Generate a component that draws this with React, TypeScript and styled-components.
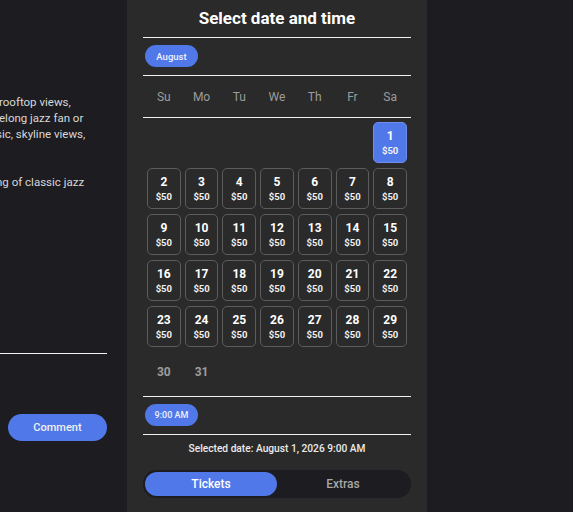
import { createGlobalStyle } from 'styled-components';
import styled from 'styled-components';

const GlobalStyle = createGlobalStyle`
  html, body {
    margin: 0;
    padding: 0;
    background: #1c1c21;
  }
  body {
    font-family: Roboto, Inter, "Noto Sans", sans-serif;
    color: #e6e6e6;
    overflow: hidden;
  }
`;

const Page = styled.div`
  display: grid;
  grid-template-columns: 127px 300px 1fr;
  height: 512px;
  background: #1c1c21;
`;

const LeftColumn = styled.div`
  display: flex;
  flex-direction: column;
  overflow: hidden;
  padding-top: 94px;
`;

const Paragraph = styled.div<{ $gap?: number }>`
  font-size: 11.5px;
  line-height: 16px;
  color: #d8d8d8;
  white-space: nowrap;
  margin-bottom: ${p => p.$gap || 0}px;
`;

const Line = styled.div<{ $shift: number }>`
  margin-left: ${p => p.$shift}px;
`;

const Rule = styled.hr<{ $width?: string }>`
  border: none;
  border-top: 1px solid #f2f2f2;
  margin: 0;
  width: ${p => p.$width || '100%'};
`;

const CommentButton = styled.button`
  margin: 60px 0 0 8px;
  width: 99px;
  height: 27px;
  border: none;
  border-radius: 14px;
  background: #5078e8;
  color: #f0f0f0;
  font-family: inherit;
  font-size: 11px;
  font-weight: 500;
`;

const Panel = styled.div`
  background: #2a2a2a;
  padding: 0 16px;
  display: flex;
  flex-direction: column;
`;

const Title = styled.h2`
  margin: 0;
  height: 37px;
  line-height: 37px;
  text-align: center;
  font-size: 17px;
  font-weight: 700;
  color: #ffffff;
`;

const PillRow = styled.div`
  display: flex;
  padding: 7px 2px 8px;
`;

const Pill = styled.div<{ $small?: boolean }>`
  width: 53px;
  height: 22px;
  border-radius: 11px;
  background: #5078e8;
  color: #eef0ff;
  font-size: ${p => (p.$small ? 9 : 9.5)}px;
  font-weight: 500;
  display: flex;
  align-items: center;
  justify-content: center;
`;

const WeekRow = styled.div`
  display: grid;
  grid-template-columns: repeat(7, 1fr);
  column-gap: 4px;
  padding: 0 4px;
  height: 41px;
  align-items: center;
  color: #9c9c9c;
  font-size: 12px;
  text-align: center;
`;

const DayGrid = styled.div`
  display: grid;
  grid-template-columns: repeat(7, 1fr);
  column-gap: 4px;
  row-gap: 5px;
  padding: 4px 4px 0;
`;

const DayCell = styled.div<{ $selected?: boolean; $disabled?: boolean }>`
  height: 41px;
  box-sizing: border-box;
  border-radius: 5px;
  border: 1px solid ${p => (p.$disabled ? 'transparent' : p.$selected ? '#6f8fee' : '#5c5c5c')};
  background: ${p => (p.$selected ? '#5078e8' : 'transparent')};
  display: flex;
  flex-direction: column;
  align-items: center;
  justify-content: ${p => (p.$disabled ? 'center' : 'flex-start')};
  padding-top: ${p => (p.$disabled ? 0 : 6)}px;
  color: ${p => (p.$disabled ? '#9c9c9c' : '#ffffff')};
`;

const DayNum = styled.span`
  font-size: 12px;
  font-weight: 700;
  line-height: 15px;
`;

const Price = styled.span`
  font-size: 9.5px;
  font-weight: 700;
  line-height: 14px;
  color: #f0f0f0;
`;

const Spacer = styled.div<{ $h: number }>`
  height: ${p => p.$h}px;
`;

const SelectedText = styled.div`
  text-align: center;
  font-size: 10.2px;
  font-weight: 500;
  color: #ececec;
  height: 28px;
  line-height: 28px;
`;

const Tabs = styled.div`
  margin-top: 7px;
  height: 28px;
  border-radius: 14px;
  background: #1c1c21;
  display: grid;
  grid-template-columns: 1fr 1fr;
  padding: 2px;
  box-sizing: border-box;
`;

const Tab = styled.div<{ $active?: boolean }>`
  border-radius: 12px;
  background: ${p => (p.$active ? '#5078e8' : 'transparent')};
  color: ${p => (p.$active ? '#ffffff' : '#a8a8a8')};
  font-size: 12px;
  font-weight: 500;
  display: flex;
  align-items: center;
  justify-content: center;
`;

const RightColumn = styled.div`
  background: #1c1c21;
`;

const weekDays = ['Su', 'Mo', 'Tu', 'We', 'Th', 'Fr', 'Sa'];

const App = () => {
  const days = Array.from({ length: 31 }, (_, i) => i + 1);
  const leading = 6;

  return (
    <>
      <GlobalStyle />
      <Page>
        <LeftColumn>
          <Paragraph $gap={32}>
            <Line $shift={-1}>rooftop views,</Line>
            <Line $shift={-1}>elong jazz fan or</Line>
            <Line $shift={-4}>sic, skyline views,</Line>
          </Paragraph>
          <Paragraph>
            <Line $shift={-4}>ng of classic jazz</Line>
          </Paragraph>
          <Spacer $h={163} />
          <Rule $width="107px" />
          <CommentButton>Comment</CommentButton>
        </LeftColumn>

        <Panel>
          <Title>Select date and time</Title>
          <Rule />
          <PillRow>
            <Pill>August</Pill>
          </PillRow>
          <Rule />
          <WeekRow>
            {weekDays.map(d => (
              <span key={d}>{d}</span>
            ))}
          </WeekRow>
          <Rule />
          <DayGrid>
            {Array.from({ length: leading }, (_, i) => (
              <div key={`e${i}`} />
            ))}
            {days.map(d => {
              const disabled = d >= 30;
              return (
                <DayCell key={d} $selected={d === 1} $disabled={disabled}>
                  <DayNum>{d}</DayNum>
                  {!disabled && <Price>$50</Price>}
                </DayCell>
              );
            })}
          </DayGrid>
          <Spacer $h={3} />
          <Rule />
          <PillRow>
            <Pill $small>9:00 AM</Pill>
          </PillRow>
          <Rule />
          <SelectedText>Selected date: August 1, 2026 9:00 AM</SelectedText>
          <Tabs>
            <Tab $active>Tickets</Tab>
            <Tab>Extras</Tab>
          </Tabs>
        </Panel>

        <RightColumn />
      </Page>
    </>
  );
};

export default App;
